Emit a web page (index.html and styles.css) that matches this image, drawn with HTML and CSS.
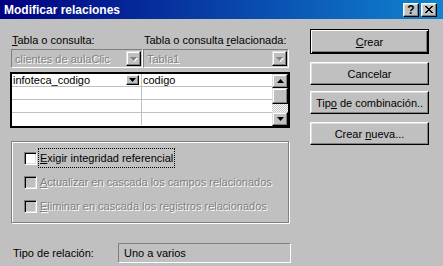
FILE: index.html
```html
<!DOCTYPE html>
<html lang="es">

<head>
    <meta charset="UTF-8">
    <meta name="viewport" content="width=device-width, initial-scale=1.0">
    <title>Modificar relaciones</title>
    <link rel="stylesheet" href="styles.css">
</head>

<body>
    <div class="window">

        <div class="titlebar">
            <span class="title">Modificar relaciones</span>
            <span class="tb-btn help">?</span>
            <span class="tb-btn">
                <svg width="8" height="7" viewBox="0 0 8 7"><path d="M0 0L7 7M1 0L8 7M7 0L0 7M8 0L1 7" stroke="#000" stroke-width="1"/></svg>
            </span>
        </div>

        <div class="dialog">
            <div class="left">
                <div class="labels">
                    <span class="lbl-1"><u>T</u>abla o consulta:</span>
                    <span>Tabla o consulta <u>r</u>elacionada:</span>
                </div>

                <div class="combos">
                    <div class="combo combo-1">
                        <span class="combo-text">clientes de aulaClic</span>
                        <span class="drop disabled">
                            <svg width="7" height="4" viewBox="0 0 7 4"><path d="M0 0H7L3.5 4Z" fill="#808080"/></svg>
                        </span>
                    </div>
                    <div class="combo combo-2">
                        <span class="combo-text">Tabla1</span>
                        <span class="drop disabled">
                            <svg width="7" height="4" viewBox="0 0 7 4"><path d="M0 0H7L3.5 4Z" fill="#808080"/></svg>
                        </span>
                    </div>
                </div>

                <div class="grid">
                    <div class="rows">
                        <div class="row">
                            <div class="cell first">
                                <span>infoteca_codigo</span>
                                <span class="mini-drop">
                                    <svg width="7" height="4" viewBox="0 0 7 4"><path d="M0 0H7L3.5 4Z" fill="#000"/></svg>
                                </span>
                            </div>
                            <div class="cell">codigo</div>
                        </div>
                        <div class="row"><div class="cell first"></div><div class="cell"></div></div>
                        <div class="row"><div class="cell first"></div><div class="cell"></div></div>
                        <div class="row last"><div class="cell first"></div><div class="cell"></div></div>
                    </div>
                    <div class="scrollbar">
                        <span class="sb-btn">
                            <svg width="7" height="4" viewBox="0 0 7 4"><path d="M0 4H7L3.5 0Z" fill="#000"/></svg>
                        </span>
                        <span class="sb-thumb"></span>
                        <span class="sb-track"></span>
                        <span class="sb-btn">
                            <svg width="7" height="4" viewBox="0 0 7 4"><path d="M0 0H7L3.5 4Z" fill="#000"/></svg>
                        </span>
                    </div>
                </div>

                <div class="group">
                    <div class="check-row">
                        <span class="box"></span>
                        <span class="check-label focus"><u>E</u>xigir integridad referencial</span>
                    </div>
                    <div class="check-row off">
                        <span class="box"></span>
                        <span class="check-label"><u>A</u>ctualizar en cascada los campos relacionados</span>
                    </div>
                    <div class="check-row off">
                        <span class="box"></span>
                        <span class="check-label"><u>E</u>liminar en cascada los registros relacionados</span>
                    </div>
                </div>

                <div class="relation">
                    <span class="rel-label">Tipo de relación:</span>
                    <span class="rel-box">Uno a varios</span>
                </div>
            </div>

            <div class="right">
                <button class="btn btn-default"><u>C</u>rear</button>
                <button class="btn btn-cancel">Cancelar</button>
                <button class="btn btn-join">Tip<u>o</u> de combinación..</button>
                <button class="btn btn-new">Crear <u>n</u>ueva...</button>
            </div>
        </div>

    </div>
</body>

</html>
```

FILE: styles.css
```css
* {
    margin: 0;
    padding: 0;
    box-sizing: border-box;
}

body {
    width: 443px;
    height: 266px;
    overflow: hidden;
    background-color: #c0c0c0;
    font-family: "Liberation Sans", Arial, sans-serif;
    font-size: 11px;
    color: #000;
}

u {
    text-decoration: underline;
    text-underline-offset: 1px;
}

/* barra de titulo */
.titlebar {
    height: 19px;
    display: flex;
    align-items: center;
    padding: 0 6px 0 4px;
    background: linear-gradient(to right, #000080, #1084d0);
    color: #fff;
    font-size: 12px;
    font-weight: bold;
}

.title {
    flex: 1;
}

.tb-btn {
    width: 16px;
    height: 14px;
    margin-left: 2px;
    display: flex;
    align-items: center;
    justify-content: center;
    background-color: #c0c0c0;
    border: 1px solid;
    border-color: #fff #000 #000 #fff;
    box-shadow: inset -1px -1px #808080, inset 1px 1px #dfdfdf;
    color: #000;
    font-size: 12px;
}

/* cuerpo */
.dialog {
    display: flex;
    padding-left: 10px;
}

.left {
    width: 282px;
    padding-top: 14px;
}

.labels {
    display: flex;
    height: 14px;
    line-height: 14px;
}

.lbl-1 {
    width: 134px;
    padding-left: 2px;
}

.combos {
    display: flex;
    margin: 2px 0 0 1px;
}

.combo {
    height: 19px;
    display: flex;
    align-items: center;
    border: 1px solid;
    border-color: #808080 #fff #fff #808080;
    padding: 1px;
}

.combo-1 {
    width: 132px;
}

.combo-2 {
    width: 146px;
}

.combo-text {
    flex: 1;
    padding-left: 2px;
    color: #808080;
    text-shadow: 1px 1px 0 #fff;
    white-space: nowrap;
    overflow: hidden;
}

.drop {
    width: 15px;
    height: 15px;
    display: flex;
    align-items: center;
    justify-content: center;
    background-color: #c0c0c0;
    border: 1px solid;
    border-color: #dfdfdf #000 #000 #dfdfdf;
    box-shadow: inset -1px -1px #808080, inset 1px 1px #fff;
}

.drop svg {
    filter: drop-shadow(1px 1px 0 #fff);
}

/* cuadricula */
.grid {
    width: 280px;
    height: 56px;
    margin-top: 4px;
    display: flex;
    border: 2px solid #000;
    background-color: #fff;
}

.rows {
    flex: 1;
}

.row {
    display: flex;
    height: 13px;
    border-bottom: 1px solid #c0c0c0;
}

.row.last {
    height: 12px;
    border-bottom: 0;
}

.cell {
    flex: 1;
    line-height: 12px;
    padding-left: 1px;
}

.cell.first {
    flex: none;
    width: 130px;
    display: flex;
    align-items: center;
    border-right: 1px solid #c0c0c0;
}

.cell.first span:first-child {
    flex: 1;
}

.mini-drop {
    width: 13px;
    height: 10px;
    margin-right: 2px;
    display: flex;
    align-items: center;
    justify-content: center;
    background-color: #c0c0c0;
    border: 1px solid;
    border-color: #fff #000 #000 #fff;
    box-shadow: inset -1px -1px #808080;
}

.scrollbar {
    width: 16px;
    display: flex;
    flex-direction: column;
}

.sb-btn,
.sb-thumb {
    height: 14px;
    display: flex;
    align-items: center;
    justify-content: center;
    background-color: #c0c0c0;
    border: 1px solid;
    border-color: #dfdfdf #000 #000 #dfdfdf;
    box-shadow: inset -1px -1px #808080, inset 1px 1px #fff;
}

.sb-thumb {
    height: 16px;
}

.sb-track {
    flex: 1;
    background: repeating-conic-gradient(#fff 0 25%, #c0c0c0 0 50%) 0 0 / 2px 2px;
}

/* casillas */
.group {
    width: 278px;
    height: 82px;
    margin: 13px 0 0 1px;
    padding: 4px 0 0 12px;
    border: 1px solid #808080;
    box-shadow: 1px 1px 0 #fff, inset 1px 1px 0 #fff;
}

.check-row {
    height: 24px;
    display: flex;
    align-items: center;
}

.box {
    width: 13px;
    height: 13px;
    border: 1px solid;
    border-color: #808080 #fff #fff #808080;
    box-shadow: inset 1px 1px #000, inset -1px -1px #dfdfdf;
    background-color: #fff;
}

.check-label {
    margin-left: 2px;
    padding: 3px 1px;
    white-space: nowrap;
}

.check-label.focus {
    outline: 1px dotted #000;
}

.off .box {
    background-color: #c0c0c0;
}

.off .check-label {
    color: #808080;
    text-shadow: 1px 1px 0 #fff;
}

/* tipo de relacion */
.relation {
    display: flex;
    align-items: center;
    margin-top: 20px;
}

.rel-label {
    width: 108px;
    padding-left: 3px;
}

.rel-box {
    width: 173px;
    height: 20px;
    line-height: 18px;
    padding-left: 5px;
    border: 1px solid;
    border-color: #808080 #fff #fff #808080;
}

/* botones */
.right {
    margin-left: 18px;
    padding-top: 10px;
    display: flex;
    flex-direction: column;
}

.btn {
    width: 119px;
    height: 23px;
    font-family: inherit;
    font-size: 11px;
    color: #000;
    background-color: #c0c0c0;
    border: 1px solid;
    border-color: #fff #000 #000 #fff;
    box-shadow: inset -1px -1px #808080, inset 1px 1px #dfdfdf;
    white-space: nowrap;
}

.btn-default {
    height: 25px;
    border-color: #000;
    box-shadow: inset 1px 1px #fff, inset -1px -1px #000, inset -2px -2px #808080;
}

.btn-cancel {
    margin-top: 8px;
}

.btn-join {
    margin-top: 6px;
}

.btn-new {
    margin-top: 8px;
}
```
